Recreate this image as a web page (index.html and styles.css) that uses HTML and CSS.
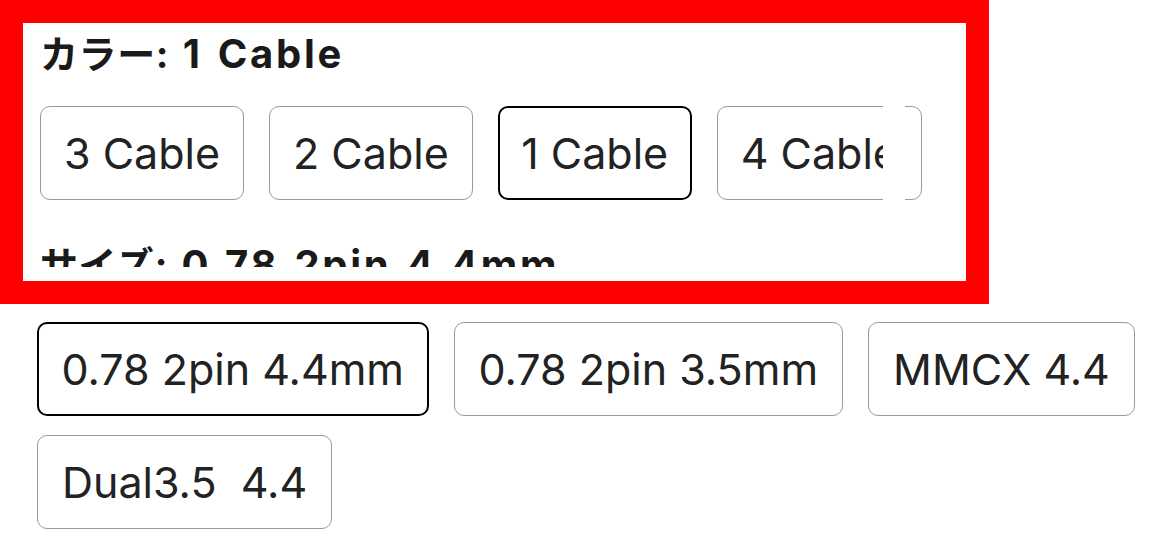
FILE: index.html
```html
<!DOCTYPE html>
<html lang="ja">
<head>
<meta charset="utf-8">
<title>Options</title>
<link rel="stylesheet" href="styles.css">
</head>
<body>
  <div class="highlight">
    <div class="highlight-inner">
      <div class="label"><span class="key">カラー:</span> <span class="val">1 Cable</span></div>
      <div class="row">
        <div class="opt">3 Cable</div>
        <div class="opt">2 Cable</div>
        <div class="opt selected">1 Cable</div>
        <div class="opt">4 Cable</div>
      </div>
      <div class="label label-next"><span class="key">サイズ:</span> <span class="val">0.78 2pin 4.4mm</span></div>
      <div class="cut"></div>
    </div>
  </div>
  <div class="sizes">
    <div class="opt selected">0.78 2pin 4.4mm</div>
    <div class="opt">0.78 2pin 3.5mm</div>
    <div class="opt">MMCX 4.4</div>
    <div class="opt">Dual3.5&nbsp; 4.4</div>
  </div>
</body>
</html>
```
FILE: styles.css
```css
* { box-sizing: border-box; }
html, body { margin: 0; padding: 0; background: #fff; }
body {
  width: 1170px;
  height: 540px;
  overflow: hidden;
  font-family: Inter, "Noto Sans CJK JP", sans-serif;
  color: #1d1d1f;
}
.highlight {
  width: 989px;
  height: 304px;
  border: 23px solid #ff0000;
  background: #fff;
}
.highlight-inner {
  position: relative;
  height: 244px;
  overflow: hidden;
  padding: 8px 0 0 17px;
}
.label {
  font-size: 38px;
  line-height: 46px;
  font-weight: 700;
  letter-spacing: 0.6px;
  word-spacing: 4px;
  color: #1a1a1a;
  white-space: nowrap;
}
.label .val {
  font-size: 40px;
  letter-spacing: 2.7px;
  word-spacing: 3px;
}
.label-next { margin-top: 42px; }
.row {
  display: flex;
  gap: 25px;
  margin-top: 29px;
  padding-left: 1px;
  overflow: hidden;
}
.row .opt:first-child { margin-left: -1px; }
.opt {
  flex: none;
  height: 94px;
  display: flex;
  align-items: center;
  padding: 0 23px;
  border: 1px solid #9a9a9a;
  border-radius: 10px;
  font-size: 43px;
  color: #222;
  white-space: nowrap;
  background: #fff;
}
.opt.selected {
  border: 2.5px solid #000;
  padding: 0 21.5px;
}
.sizes .opt { padding: 0 24px; }
.sizes .opt.selected { padding: 0 22.5px; }
.cut {
  position: absolute;
  left: 860px;
  top: 74px;
  width: 22px;
  height: 110px;
  background: #fff;
}
.sizes {
  display: flex;
  flex-wrap: wrap;
  gap: 19px 25px;
  padding: 18px 0 0 37px;
  width: 1170px;
}
```
